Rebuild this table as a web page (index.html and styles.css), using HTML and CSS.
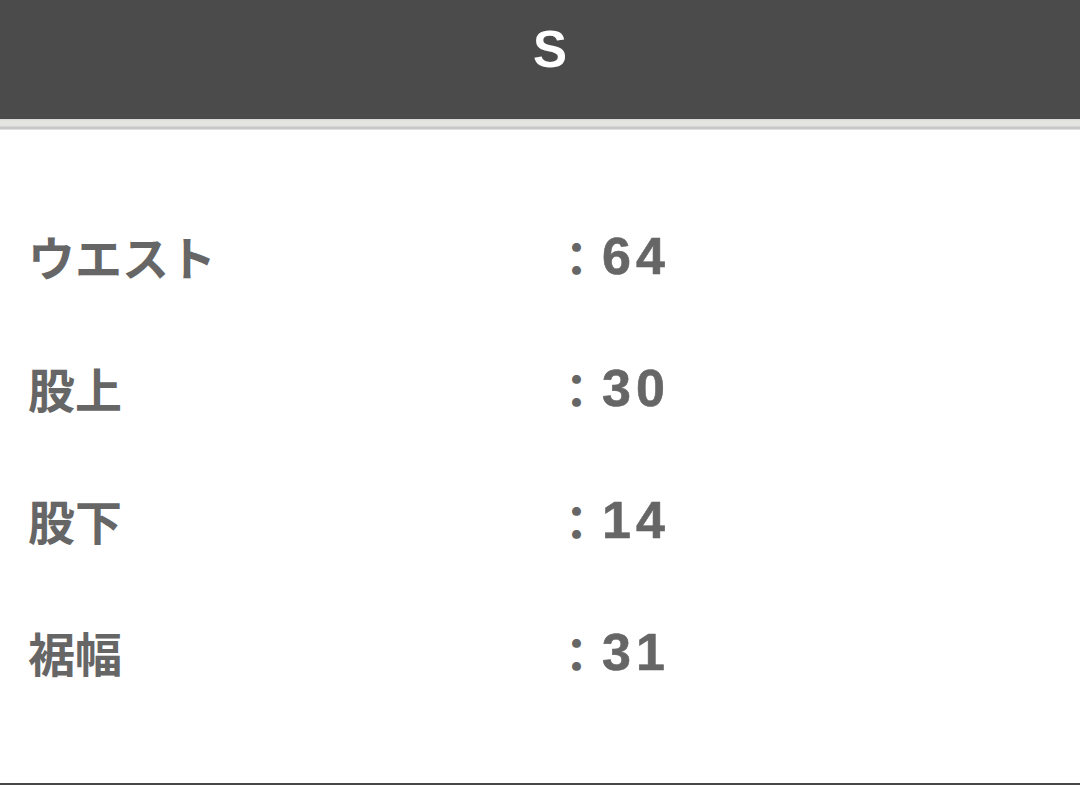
FILE: index.html
```html
<!DOCTYPE html>
<html lang="ja">
<head>
<meta charset="utf-8">
<link rel="stylesheet" href="styles.css">
</head>
<body>
<div class="page">
  <header class="head"><span class="size">S</span></header>
  <div class="band"></div>
  <div class="list">
    <div class="row"><span class="label">ウエスト</span><span class="value"><span class="colon">：</span>64</span></div>
    <div class="row"><span class="label">股上</span><span class="value"><span class="colon">：</span>30</span></div>
    <div class="row"><span class="label">股下</span><span class="value"><span class="colon">：</span>14</span></div>
    <div class="row"><span class="label">裾幅</span><span class="value"><span class="colon">：</span>31</span></div>
  </div>
  <div class="bottom"></div>
</div>
</body>
</html>
```
FILE: styles.css
```css
html, body {
  margin: 0;
  padding: 0;
  background: #ffffff;
}
.page {
  width: 1080px;
  height: 785px;
  display: flex;
  flex-direction: column;
  font-family: "Noto Sans CJK JP", "Liberation Sans", sans-serif;
}
.head {
  height: 119px;
  background: #4b4b4b;
  display: flex;
  align-items: center;
  justify-content: center;
}
.size {
  color: #ffffff;
  font-family: "Liberation Sans", Arial, sans-serif;
  font-weight: bold;
  font-size: 51px;
  margin-left: 20px;
  margin-top: -20px;
}
.band {
  height: 11px;
  background: linear-gradient(#d6d6d2 0, #e4e4e0 2px, #e4e4e0 7px, #c8c8c8 8px, #c8c8c8 10px, #f6f6f6 11px);
}
.list {
  flex: 1;
  padding-top: 60px;
  display: flex;
  flex-direction: column;
}
.row {
  height: 133px;
  display: flex;
  align-items: center;
  font-weight: bold;
  color: #666666;
  font-size: 47px;
  margin-top: -1px;
}
.label {
  width: 525px;
  padding-left: 28px;
}
.value {
  display: flex;
  align-items: center;
  font-family: "Liberation Sans", Arial, sans-serif;
  font-size: 52px;
  letter-spacing: 5px;
  -webkit-text-stroke: 0.6px #666666;
}
.colon {
  font-family: "Noto Sans CJK JP", sans-serif;
  font-size: 47px;
  letter-spacing: 0;
  width: 49px;
  -webkit-text-stroke: 0;
}
.bottom {
  height: 2px;
  background: #474747;
  margin-bottom: 0;
}
```
